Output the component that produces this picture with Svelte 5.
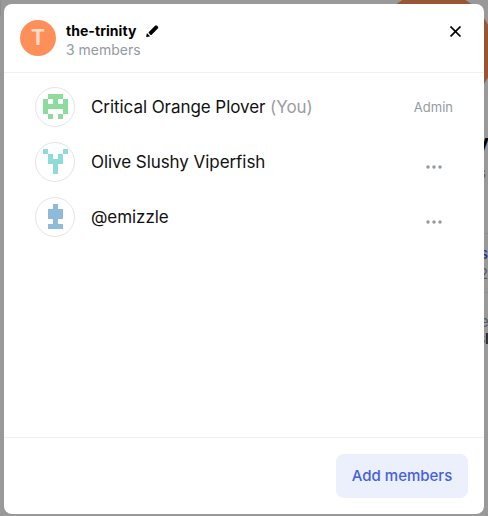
<script>
  const members = [
    { name: 'Critical Orange Plover', you: true, color: '#8edb9e', rows: ['01110', '10101', '11111', '10001', '01010'] },
    { name: 'Olive Slushy Viperfish', color: '#8edbd8', rows: ['10001', '01010', '01110', '00100', '00100'] },
    { name: '@emizzle', color: '#8ebbdb', rows: ['00100', '01110', '01110', '00100', '01110'] },
  ];
</script>

<div class="page">
  <div class="behind">
    <div class="group-logo"></div>
    <div class="line edge"></div>
    <div class="line" style="top: 233px"></div>
    <div class="line" style="top: 292px"></div>
    <span class="title">y</span>
    <span class="sub">s</span>
    <span class="link">s</span>
    <span class="two">2</span>
    <span class="word">e</span>
    <span class="label">sl</span>
  </div>
  <section class="modal">
    <header>
      <div class="group">T</div>
      <div class="heading">
        <div class="name">
          <span>the-trinity</span>
          <svg width="16" height="16" viewBox="0 0 16 16">
            <path d="M4.9 8.9 11 2.8a1.5 1.5 0 0 1 2.1 0l.7.7a1.5 1.5 0 0 1 0 2.1L7.7 11.7a1 1 0 0 1-1.4 0L4.9 10.3a1 1 0 0 1 0-1.4Z" />
            <path d="M3.3 10.4 5.9 13a.3.3 0 0 1-.2.4L2.8 13.9a.5.5 0 0 1-.6-.6l.6-2.8a.3.3 0 0 1 .5-.1Z" />
          </svg>
        </div>
        <div class="count">3 members</div>
      </div>
      <button class="close" aria-label="Close">
        <svg width="12" height="12" viewBox="0 0 12 12"><path d="M.5 .5 10.5 10.5M10.5 .5 .5 10.5" /></svg>
      </button>
    </header>
    <main>
      {#each members as m}
        <div class="member">
          <div class="avatar">
            <svg width="25" height="25" viewBox="0 0 25 25" shape-rendering="crispEdges" fill={m.color}>
              {#each m.rows as row, y}
                {#each row.split('') as cell, x}
                  {#if cell === '1'}<rect x={x * 5} y={y * 5} width="5" height="5" />{/if}
                {/each}
              {/each}
            </svg>
          </div>
          <div class="member-name">{m.name}{#if m.you}<span class="you">&nbsp;(You)</span>{/if}</div>
          {#if m.you}
            <div class="role">Admin</div>
          {:else}
            <button class="more" aria-label="Member options">
              <svg width="16" height="4" viewBox="0 0 16 4"><circle cx="2" cy="2" r="1.75" /><circle cx="8" cy="2" r="1.75" /><circle cx="14" cy="2" r="1.75" /></svg>
            </button>
          {/if}
        </div>
      {/each}
    </main>
    <footer><button class="add">Add members</button></footer>
  </section>
</div>

<style>
  .page {
    position: relative;
    box-sizing: border-box;
    width: 488px;
    height: 516px;
    padding: 4px 4px 2px;
    overflow: hidden;
    background: #999;
    font-family: Inter, "Liberation Sans", sans-serif;
  }
  button { border: 0; padding: 0; font: inherit; background: none; }
  svg { display: block; }
  .behind { position: absolute; inset: 0; overflow: hidden; }
  .behind span { position: absolute; line-height: 1; }
  .group-logo { position: absolute; left: 374px; top: -9px; width: 120px; height: 120px; border-radius: 50%; background: #995635; }
  .line { position: absolute; left: 484px; width: 4px; height: 1px; background: #8e8f90; }
  .line.edge { left: 0; top: 0; width: 1px; height: 16px; }
  .title { right: -1px; top: 131px; font-size: 22px; font-weight: 700; color: #000; }
  .sub { left: 479px; top: 167px; font-size: 13px; color: #565c63; }
  .link { left: 480px; top: 246px; font-size: 15px; font-weight: 500; color: #28368a; }
  .two { left: 479px; top: 266px; font-size: 15px; color: #565c63; }
  .word { left: 480px; top: 314px; font-size: 15px; color: #565c63; }
  .label { left: 477px; top: 331px; font-size: 15px; font-weight: 500; color: #111; }
  .modal {
    position: relative;
    display: flex;
    flex-direction: column;
    width: 480px;
    height: 510px;
    border-radius: 8px;
    background: #fff;
  }
  header {
    display: flex;
    box-sizing: border-box;
    height: 69px;
    padding: 16px 20px 0 16px;
    border-bottom: 1px solid #eef0f1;
  }
  .group {
    width: 36px;
    height: 36px;
    border-radius: 50%;
    background: #ff8f59;
    color: #ffdac8;
    font-size: 21px;
    font-weight: 700;
    line-height: 36px;
    text-align: center;
  }
  .heading { flex: 1; margin-left: 10px; }
  .name { display: flex; gap: 8px; height: 20px; font-size: 14px; font-weight: 700; line-height: 21px; letter-spacing: 0.05px; color: #000; }
  .name svg { margin-top: 3px; }
  .count { font-size: 14px; line-height: 20px; color: #939ba1; }
  .close { width: 16px; height: 24px; padding: 6px 2px; }
  .close path { fill: none; stroke: #000; stroke-width: 1.7; }
  main { flex: 1; padding: 6px 31px 0; }
  .member { display: flex; align-items: center; height: 55px; }
  .avatar {
    display: grid;
    place-items: center;
    box-sizing: border-box;
    width: 40px;
    height: 40px;
    border: 1px solid #e5e5e5;
    border-radius: 50%;
  }
  .member-name { flex: 1; margin-left: 16px; font-size: 17px; line-height: 24px; letter-spacing: -0.06px; color: #111; }
  .you { color: #9b9da1; }
  .role { font-size: 13px; color: #939ba1; }
  .more { margin: 10px 11px 0 0; }
  .more svg { fill: #939ba1; }
  footer {
    display: flex;
    justify-content: flex-end;
    box-sizing: border-box;
    height: 77px;
    padding: 16px 16px 0;
    border-top: 1px solid #eef0f1;
  }
  .add { width: 132px; height: 44px; padding-bottom: 2px; border-radius: 8px; background: #eceffc; color: #4360df; font-size: 15px; font-weight: 500; }
</style>
